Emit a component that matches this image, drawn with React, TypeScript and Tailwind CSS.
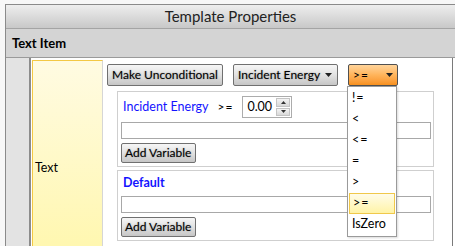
const font = "font-['Lato','Noto_Sans',sans-serif]";

const btnBase =
  'border border-[#707070] rounded-[2px] bg-gradient-to-b from-[#f6f6f6] via-[#e2e2e2] to-[#c6c6c6] text-[12px] text-black [text-shadow:0_0_1.5px_#8a8a8a] flex items-center whitespace-nowrap';

const ops = ['!=', '<', '<=', '=', '>', '>=', 'IsZero'];

function Caret() {
  return (
    <svg width="7" height="4" viewBox="0 0 7 4" className="ml-auto shrink-0">
      <path d="M0 0h7L3.5 4z" fill="#222" />
    </svg>
  );
}

function ConditionBox({ label, bold, op }: { label: string; bold?: boolean; op?: boolean }) {
  return (
    <div className="border border-[#cfcfcf] pl-[3px] pr-[2px]">
      <div className={`${op ? 'h-[30px]' : 'h-[25px]'} flex items-center gap-[9px] pl-[2px]`}>
        <span className={`text-[12.5px] text-[#1414ff] ${bold ? 'font-bold' : ''}`}>{label}</span>
        {op && (
          <>
            <span className="text-[12px] text-black tracking-[1px]">&gt;=</span>
            <div className="h-[22px] w-[50px] border border-[#acacac] flex">
              <span className="flex-1 pl-[4px] text-[12.5px] leading-[20px]">0.00</span>
              <div className="w-[14px] my-[1px] mr-[1px] flex flex-col gap-[1px]">
                <div className="flex-1 bg-gradient-to-b from-[#f4f4f4] to-[#d8d8d8] border border-[#c4c4c4] flex items-center justify-center">
                  <svg width="5" height="3" viewBox="0 0 5 3"><path d="M2.5 0L5 3H0z" fill="#333" /></svg>
                </div>
                <div className="flex-1 bg-gradient-to-b from-[#f4f4f4] to-[#d8d8d8] border border-[#c4c4c4] flex items-center justify-center">
                  <svg width="5" height="3" viewBox="0 0 5 3"><path d="M0 0h5L2.5 3z" fill="#333" /></svg>
                </div>
              </div>
            </div>
          </>
        )}
      </div>
      <div className="h-[17px] border border-[#a8a8a8] bg-white" />
      <div className="pt-[4px] pb-[3px]">
        <button className={`${btnBase} h-[20px] w-[75px] px-[3px] text-[12.5px]`}>Add Variable</button>
      </div>
    </div>
  );
}

export default function App() {
  return (
    <div className={`w-[455px] h-[246px] overflow-hidden bg-[#f7f7f7] pt-[4px] pl-[5px] ${font}`}>
      <div className="h-full border-l border-t border-[#8a8a8a] flex flex-col bg-white">
        <div className="h-[24px] shrink-0 bg-gradient-to-b from-[#eeeeee] to-[#c8c8c8] border-b border-[#a4a4a4] flex items-center justify-center text-[15px] text-[#222]">
          Template Properties
        </div>
        <div className="h-[29px] shrink-0 bg-[#d4d4d4] border-b border-[#9a9a9a] flex items-center pl-[6px] pt-[2px] text-[13px] font-bold text-black">
          Text Item
        </div>
        <div className="flex-1 flex min-h-0">
          <div className="w-[25px] shrink-0 bg-[#e3e3e3] border-r-2 border-[#8c8c8c]" />
          <div className="w-[72px] shrink-0 pl-[1px] pt-[2px] bg-white">
            <div className="h-full border-l border-t border-[#f3c845] border-r border-r-[#d6d6d6] bg-gradient-to-b from-[#fffbe2] to-[#fff7b0] pl-[2px] pt-[98px] text-[12.5px] text-black">
              Text
            </div>
          </div>
          <div className="flex-1 relative bg-white border-r border-[#7a7a7a] pl-[4px] pt-[6px] mr-[2px]">
            <div className="flex gap-[10px]">
              <button className={`${btnBase} h-[22px] w-[116px] px-[4px]`}>Make Unconditional</button>
              <button className={`${btnBase} h-[22px] w-[105px] pl-[4px] pr-[5px]`}>
                Incident Energy
                <Caret />
              </button>
              <button className="h-[22px] w-[50px] px-[4px] border border-[#505050] rounded-[2px] bg-gradient-to-b from-[#ffd49a] via-[#ffb45a] to-[#f7901c] text-[12px] text-black flex items-center">
                <span className="tracking-[1px]">&gt;=</span>
                <Caret />
              </button>
            </div>
            <div className="ml-[10px] mr-[18px] mt-[5px] flex flex-col gap-[3px]">
              <ConditionBox label="Incident Energy" op />
              <ConditionBox label="Default" bold />
            </div>
            <div className="absolute left-[244px] top-[28px] w-[50px] bg-white border border-[#9a9a9a] shadow-[1px_1px_2px_rgba(0,0,0,0.15)] py-[1px] px-[1px]">
              {ops.map((o) => (
                <div
                  key={o}
                  className={`h-[21px] flex items-center pl-[3px] text-[12.5px] text-black ${
                    o === '>=' ? 'border border-[#f0c84a] bg-gradient-to-b from-[#fffce8] to-[#fff3a6] pl-[2px]' : ''
                  }`}
                >
                  <span className={o === 'IsZero' ? '' : 'tracking-[1px]'}>{o}</span>
                </div>
              ))}
            </div>
          </div>
        </div>
      </div>
    </div>
  );
}
